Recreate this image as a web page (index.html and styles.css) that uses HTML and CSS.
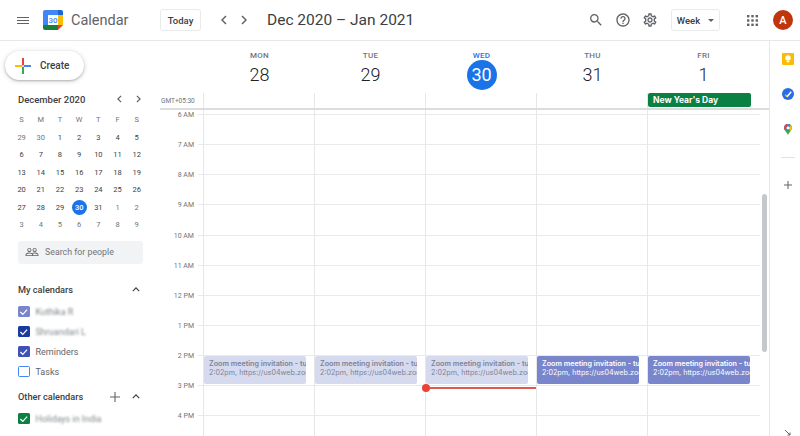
FILE: index.html
```html
<!DOCTYPE html>
<html lang="en">
<head>
<meta charset="utf-8">
<title>Calendar</title>
<link rel="stylesheet" href="styles.css">
</head>
<body>
<header class="topbar">
  <div class="brand">
    <svg class="menu-icon" viewBox="0 0 12 7" width="12" height="7"><path d="M0 0h12v1H0zM0 3h12v1H0zM0 6h12v1H0z" fill="#5f6368"/></svg>
    <svg class="logo" viewBox="0 0 20 20" width="20" height="20">
      <path d="M2 0h14v5H5v10H0V2a2 2 0 0 1 2-2z" fill="#4285f4"/>
      <path d="M15 0h3a2 2 0 0 1 2 2v3h-5z" fill="#1967d2"/>
      <rect x="15" y="5" width="5" height="10" fill="#fbbc04"/>
      <path d="M0 15h15v5H2a2 2 0 0 1-2-2z" fill="#188038"/>
      <path d="M15 15h5l-5 5z" fill="#ea4335"/>
      <rect x="5" y="5" width="10" height="10" fill="#fff"/>
      <text x="10" y="13" text-anchor="middle" class="logo-num">30</text>
    </svg>
    <span class="brand-name">Calendar</span>
  </div>
  <button class="btn btn-today">Today</button>
  <div class="nav-arrows">
    <svg viewBox="0 0 6 10" width="6" height="10"><path d="M5 1 1 5l4 4" class="chev"/></svg>
    <svg viewBox="0 0 6 10" width="6" height="10"><path d="M1 1l4 4-4 4" class="chev"/></svg>
  </div>
  <h1 class="range">Dec 2020 – Jan 2021</h1>
  <div class="tools">
    <svg class="tool" viewBox="0 0 24 24" width="16" height="16"><path fill="#5f6368" d="M15.5 14h-.79l-.28-.27A6.47 6.47 0 0 0 16 9.5 6.5 6.5 0 1 0 9.5 16c1.61 0 3.09-.59 4.23-1.57l.27.28v.79l5 4.99L20.49 19l-4.99-5zm-6 0C7.01 14 5 11.99 5 9.5S7.01 5 9.5 5 14 7.01 14 9.5 11.99 14 9.5 14z"/></svg>
    <svg class="tool" viewBox="0 0 24 24" width="16" height="16"><path fill="#5f6368" d="M11 18h2v-2h-2v2zm1-16C6.48 2 2 6.48 2 12s4.48 10 10 10 10-4.48 10-10S17.52 2 12 2zm0 18c-4.41 0-8-3.59-8-8s3.59-8 8-8 8 3.59 8 8-3.59 8-8 8zm0-14c-2.21 0-4 1.79-4 4h2c0-1.1.9-2 2-2s2 .9 2 2c0 2-3 1.75-3 5h2c0-2.25 3-2.5 3-5 0-2.21-1.79-4-4-4z"/></svg>
    <svg class="tool" viewBox="0 0 24 24" width="16" height="16"><path fill="#5f6368" d="M19.43 12.98c.04-.32.07-.64.07-.98s-.03-.66-.07-.98l2.11-1.65c.19-.15.24-.42.12-.64l-2-3.46c-.12-.22-.39-.3-.61-.22l-2.49 1c-.52-.4-1.08-.73-1.69-.98l-.38-2.65A.488.488 0 0 0 14 2h-4c-.25 0-.46.18-.49.42l-.38 2.65c-.61.25-1.17.59-1.69.98l-2.49-1a.566.566 0 0 0-.18-.03c-.17 0-.34.09-.43.25l-2 3.46c-.13.22-.07.49.12.64l2.11 1.65c-.04.32-.07.65-.07.98s.03.66.07.98l-2.11 1.65c-.19.15-.24.42-.12.64l2 3.46c.12.22.39.3.61.22l2.49-1c.52.4 1.08.73 1.69.98l.38 2.65c.03.24.24.42.49.42h4c.25 0 .46-.18.49-.42l.38-2.65c.61-.25 1.17-.59 1.69-.98l2.49 1c.06.02.12.03.18.03.17 0 .34-.09.43-.25l2-3.46c.12-.22.07-.49-.12-.64l-2.11-1.65zm-1.98-1.71c.04.31.05.52.05.73 0 .21-.02.43-.05.73l-.14 1.13.89.7 1.08.84-.7 1.21-1.27-.51-1.04-.42-.9.68c-.43.32-.84.56-1.25.73l-1.06.43-.16 1.13-.2 1.35h-1.4l-.19-1.35-.16-1.13-1.06-.43c-.43-.18-.83-.41-1.23-.71l-.91-.7-1.06.43-1.27.51-.7-1.21 1.08-.84.89-.7-.14-1.13c-.03-.31-.05-.54-.05-.74s.02-.43.05-.73l.14-1.13-.89-.7-1.08-.84.7-1.21 1.27.51 1.04.42.9-.68c.43-.32.84-.56 1.25-.73l1.06-.43.16-1.13.2-1.35h1.39l.19 1.35.16 1.13 1.06.43c.43.18.83.41 1.23.71l.91.7 1.06-.43 1.27-.51.7 1.21-1.07.85-.89.7.14 1.13zM12 8c-2.21 0-4 1.79-4 4s1.79 4 4 4 4-1.79 4-4-1.79-4-4-4zm0 6c-1.1 0-2-.9-2-2s.9-2 2-2 2 .9 2 2-.9 2-2 2z"/></svg>
  </div>
  <button class="btn btn-week">Week<span class="caret"></span></button>
  <svg class="apps" viewBox="0 0 11 11" width="11" height="11"><g fill="#5f6368"><rect width="2.4" height="2.4"/><rect x="4.3" width="2.4" height="2.4"/><rect x="8.6" width="2.4" height="2.4"/><rect y="4.3" width="2.4" height="2.4"/><rect x="4.3" y="4.3" width="2.4" height="2.4"/><rect x="8.6" y="4.3" width="2.4" height="2.4"/><rect y="8.6" width="2.4" height="2.4"/><rect x="4.3" y="8.6" width="2.4" height="2.4"/><rect x="8.6" y="8.6" width="2.4" height="2.4"/></g></svg>
  <div class="avatar">A</div>
</header>

<div class="page">
  <aside class="sidebar">
    <button class="create">
      <svg viewBox="0 0 16 16" width="16" height="16">
        <rect x="7" y="0" width="2" height="7" fill="#ea4335"/>
        <rect x="9" y="7" width="7" height="2" fill="#4285f4"/>
        <rect x="7" y="9" width="2" height="7" fill="#34a853"/>
        <rect x="0" y="7" width="7" height="2" fill="#fbbc04"/>
        <rect x="7" y="7" width="2" height="2" fill="#5f6368" opacity=".3"/>
      </svg>
      <span>Create</span>
    </button>

    <div class="mini-head">
      <span class="mini-title">December 2020</span>
      <div class="mini-nav">
        <svg viewBox="0 0 6 10" width="5" height="8"><path d="M5 1 1 5l4 4" class="chev"/></svg>
        <svg viewBox="0 0 6 10" width="5" height="8"><path d="M1 1l4 4-4 4" class="chev"/></svg>
      </div>
    </div>
    <div class="mini-grid">
      <span class="dow">S</span><span class="dow">M</span><span class="dow">T</span><span class="dow">W</span><span class="dow">T</span><span class="dow">F</span><span class="dow">S</span>
      <span class="off">29</span><span class="off">30</span><span>1</span><span>2</span><span>3</span><span>4</span><span>5</span>
      <span>6</span><span>7</span><span>8</span><span>9</span><span>10</span><span>11</span><span>12</span>
      <span>13</span><span>14</span><span>15</span><span>16</span><span>17</span><span>18</span><span>19</span>
      <span>20</span><span>21</span><span>22</span><span>23</span><span>24</span><span>25</span><span>26</span>
      <span>27</span><span>28</span><span>29</span><span class="today"><b>30</b></span><span>31</span><span class="off">1</span><span class="off">2</span>
      <span class="off">3</span><span class="off">4</span><span class="off">5</span><span class="off">6</span><span class="off">7</span><span class="off">8</span><span class="off">9</span>
    </div>

    <div class="people">
      <svg viewBox="0 0 24 24" width="14" height="14"><path fill="#5f6368" d="M16.5 13c-1.2 0-3.07.34-4.5 1-1.43-.67-3.3-1-4.5-1C5.33 13 1 14.08 1 16.25V19h22v-2.75c0-2.17-4.33-3.25-6.5-3.25zm-4 4.5h-10v-1.25c0-.54 2.56-1.75 5-1.75s5 1.21 5 1.75v1.25zm9 0H14v-1.25c0-.46-.2-.86-.52-1.22.88-.3 1.96-.53 3.02-.53 2.44 0 5 1.21 5 1.75v1.25zM7.5 12c1.93 0 3.5-1.57 3.5-3.5S9.43 5 7.5 5 4 6.57 4 8.5 5.57 12 7.5 12zm0-5.5c1.1 0 2 .9 2 2s-.9 2-2 2-2-.9-2-2 .9-2 2-2zm9 5.500c1.930 0 3.500-1.570 3.500-3.500S18.430 5 16.500 5 13 6.570 13 8.500s1.570 3.500 3.500 3.500zm0-5.500c1.100 0 2 .9 2 2s-.9 2-2 2-2-.9-2-2 .9-2 2-2z"/></svg>
      <span>Search for people</span>
    </div>

    <div class="section-head section-my">
      <span>My calendars</span>
      <svg viewBox="0 0 10 6" width="8" height="5"><path d="M1 5l4-4 4 4" class="chev dark"/></svg>
    </div>
    <ul class="cal-list">
      <li><span class="check c-lav"><svg viewBox="0 0 12 12"><path d="M2.500 6.200 5 8.700l4.500-5" class="tick"/></svg></span><span class="blurred">Kuthika R</span></li>
      <li><span class="check c-navy"><svg viewBox="0 0 12 12"><path d="M2.500 6.200 5 8.700l4.500-5" class="tick"/></svg></span><span class="blurred">Shruandari L</span></li>
      <li><span class="check c-indigo"><svg viewBox="0 0 12 12"><path d="M2.500 6.200 5 8.700l4.500-5" class="tick"/></svg></span><span>Reminders</span></li>
      <li><span class="check c-empty"></span><span>Tasks</span></li>
    </ul>
    <div class="section-head section-other">
      <span>Other calendars</span>
      <svg class="add" viewBox="0 0 10 10" width="10" height="10"><path d="M5 0v10M0 5h10" stroke="#5f6368" stroke-width="1.100" fill="none"/></svg>
      <svg viewBox="0 0 10 6" width="8" height="5"><path d="M1 5l4-4 4 4" class="chev dark"/></svg>
    </div>
    <ul class="cal-list">
      <li><span class="check c-green"><svg viewBox="0 0 12 12"><path d="M2.500 6.200 5 8.700l4.500-5" class="tick"/></svg></span><span class="blurred">Holidays in India</span></li>
    </ul>
  </aside>

  <main class="week">
    <div class="week-head">
      <div class="days-row">
        <div class="day-head"><span class="dname">MON</span><span class="dnum">28</span></div>
        <div class="day-head"><span class="dname">TUE</span><span class="dnum">29</span></div>
        <div class="day-head is-today"><span class="dname">WED</span><span class="dnum">30</span></div>
        <div class="day-head"><span class="dname">THU</span><span class="dnum">31</span></div>
        <div class="day-head"><span class="dname">FRI</span><span class="dnum">1</span></div>
      </div>
      <div class="allday-row">
        <span class="tz">GMT+05:30</span>
        <div class="allday-cell"></div>
        <div class="allday-cell"></div>
        <div class="allday-cell"></div>
        <div class="allday-cell"></div>
        <div class="allday-cell"><div class="chip">New Year's Day</div></div>
      </div>
    </div>
    <div class="week-body">
      <div class="times">
        <span>6 AM</span><span>7 AM</span><span>8 AM</span><span>9 AM</span><span>10 AM</span><span>11 AM</span><span>12 PM</span><span>1 PM</span><span>2 PM</span><span>3 PM</span><span>4 PM</span>
      </div>
      <div class="grid">
        <div class="grid-cols">
          <div class="col"><div class="event faded"><strong>Zoom meeting invitation - tuition</strong><span>2:02pm, https://us04web.zoom.us</span></div></div>
          <div class="col"><div class="event faded"><strong>Zoom meeting invitation - tuition</strong><span>2:02pm, https://us04web.zoom.us</span></div></div>
          <div class="col"><div class="event faded"><strong>Zoom meeting invitation - tuition</strong><span>2:02pm, https://us04web.zoom.us</span></div><div class="now"></div></div>
          <div class="col"><div class="event"><strong>Zoom meeting invitation - tuition</strong><span>2:02pm, https://us04web.zoom.us</span></div></div>
          <div class="col"><div class="event"><strong>Zoom meeting invitation - tuition</strong><span>2:02pm, https://us04web.zoom.us</span></div></div>
        </div>
      </div>
      <div class="scroll-track"><div class="scroll-thumb"></div></div>
    </div>
  </main>

  <aside class="rail">
    <svg viewBox="0 0 12 12" width="12" height="12"><rect width="12" height="12" rx="1" fill="#fbbc04"/><circle cx="6" cy="5" r="2.700" fill="#fff"/><rect x="4.700" y="8" width="2.600" height="1.300" fill="#fff"/></svg>
    <svg viewBox="0 0 12 12" width="12" height="12"><circle cx="6" cy="6" r="6" fill="#2a6ee6"/><path d="M3.200 6.800 5.200 8.700" stroke="#fbbc04" stroke-width="1.500" fill="none"/><path d="M5 8.700 9.200 3.800" stroke="#fff" stroke-width="1.500" fill="none"/></svg>
    <svg viewBox="0 0 10 14" width="8" height="11"><path d="M5 0a5 5 0 0 1 5 5c0 3-3 4.500-5 9-2-4.500-5-6-5-9a5 5 0 0 1 5-5z" fill="#34a853"/><path d="M5 0a5 5 0 0 1 3.800 1.800L1 8C.3 7 0 6 0 5a5 5 0 0 1 5-5z" fill="#4285f4"/><path d="M1.200 1.800A5 5 0 0 1 5 0l-.5 3L1 7.500C.3 6.700 0 6 0 5c0-1.300.4-2.300 1.200-3.200z" fill="#ea4335"/><path d="M8.800 1.800C9.600 2.700 10 3.800 10 5c0 1.500-.8 2.600-1.800 3.900L5 5z" fill="#fbbc04"/><circle cx="5" cy="5" r="1.800" fill="#fff"/></svg>
    <div class="rail-sep"></div>
    <svg viewBox="0 0 10 10" width="10" height="10"><path d="M5 1v8M1 5h8" stroke="#5f6368" stroke-width="1" fill="none"/></svg>
    <svg class="resize" viewBox="0 0 6 6" width="6" height="6"><path d="M0 0l5 5M5 2.500V5H2.500" stroke="#5f6368" stroke-width="1" fill="none"/></svg>
  </aside>
</div>
</body>
</html>
```
FILE: styles.css
```css
* { box-sizing: border-box; }
html, body { margin: 0; padding: 0; height: 100%; overflow: hidden; }
body { background: #fff; color: #3c4043; font-family: Roboto, "Liberation Sans", sans-serif; width: 800px; height: 436px; }
button { font-family: inherit; background: #fff; cursor: pointer; }

.chev { fill: none; stroke: #5f6368; stroke-width: 1.500; }
.chev.dark { stroke: #3c4043; }

.topbar { height: 41px; border-bottom: 1px solid #e6e7e9; display: flex; align-items: center; }
.brand { display: flex; align-items: center; width: 160px; padding-left: 17px; }
.menu-icon { margin-right: 14px; }
.logo { margin-right: 8px; }
.logo-num { font-size: 8px; fill: #4285f4; font-family: Roboto, sans-serif; font-weight: 500; }
.brand-name { font-size: 14.500px; color: #5f6368; }
.btn { height: 22px; border: 1px solid #e9eaec; border-radius: 3px; font-size: 9.500px; font-weight: 500; color: #3c4043; padding: 0; display: flex; align-items: center; justify-content: center; }
.btn-today { width: 41px; }
.nav-arrows { display: flex; gap: 14px; margin-left: 20px; }
.range { margin: 0 0 0 20px; font-size: 15.500px; font-weight: 400; color: #3c4043; width: 321px; white-space: nowrap; }
.tools { display: flex; gap: 11px; width: 83px; flex: none; }
.btn-week { width: 49px; gap: 8px; flex: none; }
.caret { width: 0; height: 0; border-left: 3px solid transparent; border-right: 3px solid transparent; border-top: 3px solid #5f6368; }
.apps { margin-left: 27px; flex: none; }
.avatar { width: 20px; height: 20px; border-radius: 50%; background: #bf360c; color: #fff; font-size: 11px; font-weight: 500; display: flex; align-items: center; justify-content: center; margin-left: 15px; flex: none; }

.page { display: flex; height: 395px; overflow: hidden; }

.sidebar { width: 160px; flex: none; padding: 10px 0 0 5px; }
.create { width: 79px; height: 29px; border: 0; border-radius: 15px; display: flex; align-items: center; gap: 9px; padding: 0 0 0 10px; font-size: 10px; font-weight: 500; color: #3c4043; box-shadow: 0 1px 2px rgba(60,64,67,.3), 0 1px 4px 1px rgba(60,64,67,.15); }

.mini-head { display: flex; align-items: center; justify-content: space-between; margin: 13px 0 0 13px; width: 123px; height: 12px; }
.mini-title { font-size: 9.500px; font-weight: 500; color: #3c4043; }
.mini-nav { display: flex; gap: 14px; }
.mini-grid { display: grid; grid-template-columns: repeat(7, 19.200px); grid-auto-rows: 17.500px; margin: 6px 0 0 7px; font-size: 7.500px; color: #3c4043; text-align: center; }
.mini-grid span { display: flex; align-items: center; justify-content: center; }
.mini-grid .dow { color: #70757a; }
.mini-grid .off { color: #70757a; }
.mini-grid .today b { width: 15px; height: 15px; border-radius: 50%; background: #1a73e8; color: #fff; font-weight: 500; display: flex; align-items: center; justify-content: center; }

.people { display: flex; align-items: center; gap: 6px; width: 125px; height: 23px; margin: 7px 0 0 13px; padding-left: 7px; background: #f1f3f4; border-radius: 3px; font-size: 8.800px; color: #70757a; }

.section-head { display: flex; align-items: center; font-size: 9.200px; font-weight: 500; color: #3c4043; margin-left: 13px; width: 122px; justify-content: space-between; height: 12px; }
.section-my { margin-top: 20px; }
.section-other { margin-top: 9px; }
.section-other .add { margin-left: auto; margin-right: 12px; }
.cal-list { list-style: none; margin: 6px 0 0 13px; padding: 0; font-size: 9px; color: #5f6368; }
.cal-list li { height: 20px; display: flex; align-items: center; gap: 6px; }
.check { width: 11.500px; height: 11.500px; border-radius: 1.500px; display: block; flex: none; }
.check svg { display: block; width: 100%; height: 100%; }
.tick { fill: none; stroke: #fff; stroke-width: 1.300; }
.c-lav { background: #7986cb; }
.c-navy { background: #1b3a9e; }
.c-indigo { background: #3f51b5; }
.c-green { background: #0b8043; }
.c-empty { border: 1.500px solid #4285f4; }
.blurred { filter: blur(1.200px); color: #80868b; font-size: 9px; }

.week { flex: none; width: 609px; display: flex; flex-direction: column; }
.week-head { flex: none; height: 69px; border-bottom: 2px solid #dadce0; }
.days-row { display: flex; height: 52px; padding-left: 44px; }
.day-head { width: 111px; display: flex; flex-direction: column; align-items: center; padding-top: 10px; }
.dname { font-size: 8px; font-weight: 500; color: #70757a; letter-spacing: .3px; line-height: 10px; }
.dnum { font-size: 18px; font-weight: 300; color: #202124; line-height: 30px; width: 30px; height: 30px; flex: none; text-align: center; margin-top: -1px; border-radius: 50%; }
.is-today .dname { color: #1a73e8; }
.is-today .dnum { background: #1a73e8; color: #fff; font-weight: 400; }
.allday-row { display: flex; height: 15px; position: relative; padding-left: 43px; }
.tz { position: absolute; left: 1px; top: 4px; font-size: 6.500px; color: #70757a; }
.allday-cell { width: 111px; border-left: 1px solid #e6e7e9; }
.chip { width: 103px; height: 14px; background: #0b8043; color: #fff; border-radius: 2px; font-family: Inter, Roboto, sans-serif; font-size: 8.500px; font-weight: 700; line-height: 14px; padding-left: 5px; white-space: nowrap; }

.week-body { flex: 1; display: flex; position: relative; min-height: 0; }
.times { width: 38px; flex: none; padding: 1px 4px 0 0; display: flex; flex-direction: column; align-items: flex-end; font-size: 7px; color: #70757a; }
.times span { flex: none; height: 30.150px; line-height: 8px; }
.grid { width: 562px; flex: none; background-image: repeating-linear-gradient(to bottom, #e9eaec 0, #e9eaec 1px, transparent 1px, transparent 30.150px); background-position: 0 4px; background-repeat: no-repeat; background-size: 100% 400px; }
.grid-cols { display: flex; height: 100%; padding-left: 5px; }
.col { width: 111px; flex: none; border-left: 1px solid #e6e7e9; position: relative; }
.event { position: absolute; left: 0; top: 246px; width: 102px; height: 28px; background: #7986cb; color: #fff; border-radius: 2px; padding: 3px 0 0 5px; overflow: hidden; white-space: nowrap; font-family: Inter, Roboto, sans-serif; font-size: 7.200px; line-height: 9px; }
.event strong { display: block; font-weight: 600; }
.event span { display: block; }
.event.faded { background: #d6daef; color: #7c8296; }
.now { position: absolute; left: 0; right: -1px; top: 277px; height: 2px; background: #dc5a52; }
.now::before { content: ""; position: absolute; left: -4px; top: -3px; width: 8px; height: 8px; border-radius: 50%; background: #ea4335; }

.scroll-track { position: absolute; right: 0; top: 0; bottom: 0; width: 10px; }
.scroll-thumb { position: absolute; left: 3px; top: 84px; width: 5px; height: 158px; background: #c4c7cb; border-radius: 3px; }

.rail { width: 31px; flex: none; border-left: 1px solid #e6e7e9; display: flex; flex-direction: column; align-items: center; position: relative; padding: 12px 0 0 6px; }
.rail svg:nth-of-type(2) { margin-top: 23px; }
.rail svg:nth-of-type(3) { margin-top: 24px; }
.rail-sep { width: 14px; height: 1px; background: #e0e1e3; margin-top: 22px; flex: none; }
.rail svg:nth-of-type(4) { margin-top: 22px; }
.rail .resize { position: absolute; right: 9px; bottom: 0; margin: 0; }
```
